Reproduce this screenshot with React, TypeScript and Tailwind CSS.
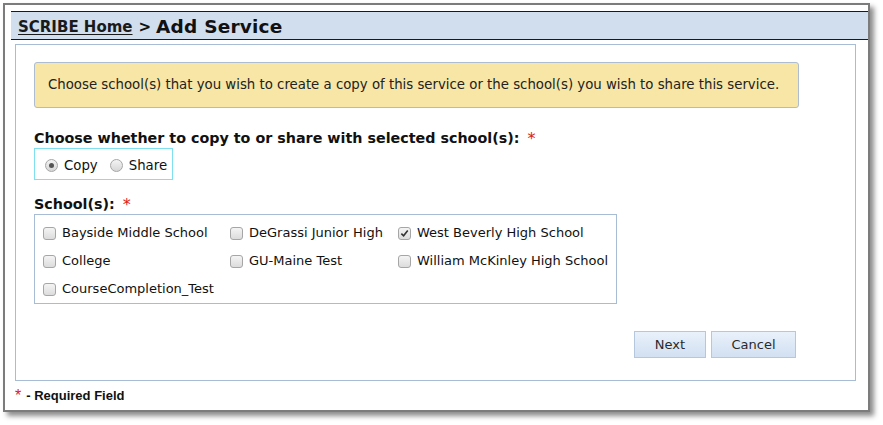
import React from 'react';

const schools = [
  { name: 'Bayside Middle School', checked: false },
  { name: 'DeGrassi Junior High', checked: false },
  { name: 'West Beverly High School', checked: true },
  { name: 'College', checked: false },
  { name: 'GU-Maine Test', checked: false },
  { name: 'William McKinley High School', checked: false },
  { name: 'CourseCompletion_Test', checked: false },
];

function Checkbox({ checked }: { checked: boolean }) {
  return (
    <span className="relative flex h-[13px] w-[13px] shrink-0 items-center justify-center rounded-[3px] border border-[#a6a6a6] bg-gradient-to-b from-[#f4f4f4] to-[#dcdcdc]">
      {checked && (
        <svg viewBox="0 0 10 10" className="h-[9px] w-[9px]">
          <path d="M1.5 5.2 L4 7.6 L8.6 1.8" fill="none" stroke="#333" strokeWidth="1.8" />
        </svg>
      )}
    </span>
  );
}

function Radio({ checked }: { checked: boolean }) {
  return (
    <span className="flex h-[13px] w-[13px] shrink-0 items-center justify-center rounded-full border border-[#a6a6a6] bg-gradient-to-b from-[#f4f4f4] to-[#d6d6d6]">
      {checked && <span className="h-[5px] w-[5px] rounded-full bg-[#555]" />}
    </span>
  );
}

export default function App() {
  return (
    <div className="h-[425px] w-[883px] bg-white pl-[3px] pt-[3px] font-['DejaVu_Sans',Verdana,sans-serif] text-[#111]">
      {/* window frame */}
      <div className="h-[409px] w-[867px] border-2 border-[#7c7c7c] bg-white shadow-[4px_4px_5px_rgba(0,0,0,0.45)]">
        {/* title bar */}
        <div className="ml-[6px] mt-[6px] flex h-[29px] items-center border-y border-[#1a1a1a] bg-[#d0deee] pl-[7px] pt-[3px]">
          <a className="text-[15px] font-bold text-[#1a1a1a] underline underline-offset-2">SCRIBE Home</a>
          <span className="ml-[6px] text-[15px] font-bold">&gt;</span>
          <span className="ml-[5px] text-[18.5px] font-bold tracking-[0.2px]">Add Service</span>
        </div>

        {/* panel */}
        <div className="ml-[10px] mt-[4px] h-[337px] w-[841px] border border-[#a9bcd6] pl-[18px] pt-[17px]">
          <div className="flex h-[46px] w-[765px] items-center rounded-[3px] border border-[#aebcd2] bg-[#f7e6a5] pl-[13px] text-[13.3px] text-[#222]">
            Choose school(s) that you wish to create a copy of this service or the school(s) you wish to share this service.
          </div>

          <div className="mt-[22px] flex h-[18px] items-center text-[14.3px] font-bold">
            Choose whether to copy to or share with selected school(s):
            <span className="ml-[8px] text-[16px] font-normal text-[#e02020]">*</span>
          </div>
          <div className="flex h-[32px] w-[139px] items-center border border-[#7fe0ef] pl-[10px] pt-[3px] text-[13.3px]">
            <Radio checked />
            <span className="ml-[6px]">Copy</span>
            <span className="ml-[12px]">
              <Radio checked={false} />
            </span>
            <span className="ml-[6px]">Share</span>
          </div>

          <div className="mt-[16px] flex h-[18px] items-center text-[14.3px] font-bold">
            School(s):
            <span className="ml-[8px] text-[16px] font-normal text-[#e02020]">*</span>
          </div>
          <div className="grid h-[90px] w-[583px] grid-cols-[187px_168px_auto] border border-[#a9bcd6] pl-[8px] pt-[4px] text-[13px]">
            {schools.map((s) => (
              <div key={s.name} className="flex h-[28px] items-center">
                <Checkbox checked={s.checked} />
                <span className="ml-[6px] whitespace-nowrap">{s.name}</span>
              </div>
            ))}
          </div>

          <div className="mt-[27px] flex w-[762px] justify-end gap-[5px] text-[13px]">
            <button className="h-[27px] w-[72px] border border-[#b4c7de] bg-gradient-to-b from-[#e9f1fb] to-[#d2e0f1] text-[#2a2a2a]">
              Next
            </button>
            <button className="h-[27px] w-[85px] border border-[#b4c7de] bg-gradient-to-b from-[#e9f1fb] to-[#d2e0f1] text-[#2a2a2a]">
              Cancel
            </button>
          </div>
        </div>

        {/* footer */}
        <div className="ml-[10px] mt-[5px] flex items-center font-['Liberation_Sans',Arial,sans-serif] text-[13px] font-bold">
          <span className="text-[16px] font-normal leading-none text-[#e02020]">*</span>
          <span className="ml-[5px]">- Required Field</span>
        </div>
      </div>
    </div>
  );
}
